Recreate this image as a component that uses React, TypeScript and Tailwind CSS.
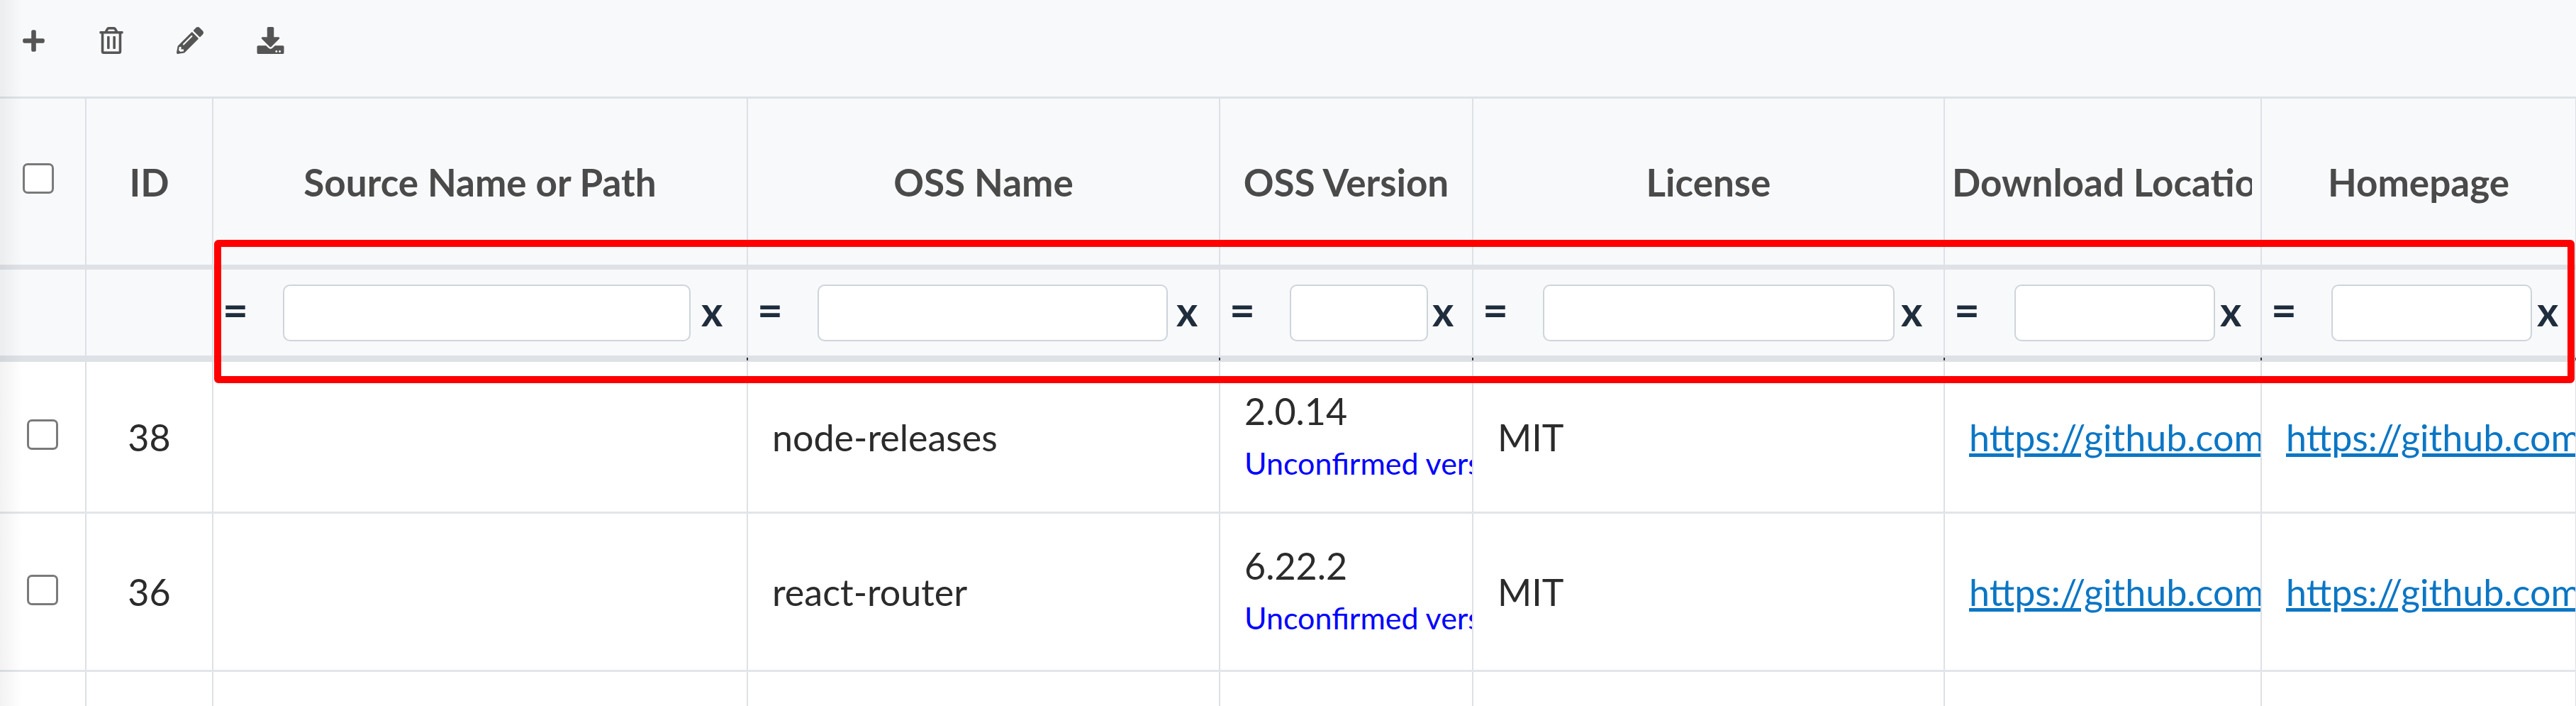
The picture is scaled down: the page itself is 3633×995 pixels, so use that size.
import React from 'react';
import { FaPlus, FaRegTrashAlt, FaPencilAlt, FaDownload } from 'react-icons/fa';

// column widths come from the reference, the last one runs off the page
const columns = [
  { key: 'check', width: 'w-[122px]' },
  { key: 'id', width: 'w-[179px]' },
  { key: 'source', width: 'w-[754px]' },
  { key: 'name', width: 'w-[666px]' },
  { key: 'version', width: 'w-[357px]' },
  { key: 'license', width: 'w-[665px]' },
  { key: 'download', width: 'w-[447px]' },
  { key: 'homepage', width: 'w-[444px]' },
];

const filters = [
  { label: 'Source Name or Path', width: 'w-[754px]', input: 'w-[575px]', gap: 'ml-[15px]' },
  { label: 'OSS Name', width: 'w-[666px]', input: 'w-[494px]', gap: 'ml-[12px]' },
  { label: 'OSS Version', width: 'w-[357px]', input: 'w-[195px]', gap: 'ml-[6px]' },
  { label: 'License', width: 'w-[665px]', input: 'w-[496px]', gap: 'ml-[9px]' },
  { label: 'Download Location', width: 'w-[447px]', input: 'w-[283px]', gap: 'ml-[7px]', clip: true },
  { label: 'Homepage', width: 'w-[444px]', input: 'w-[283px]', gap: 'ml-[7px]' },
];

const rows = [
  { id: 38, name: 'node-releases', version: '2.0.14', height: 'h-[214px]' },
  { id: 36, name: 'react-router', version: '6.22.2', height: 'h-[223px]' },
];

const line = 'border-r-2 border-[#dde0e5]';

const Checkbox = () => (
  <input type="checkbox" className="appearance-none block w-[44px] h-[43px] rounded-[7px] border-[3px] border-[#7a7a7a] bg-white" />
);

const FilterCell = ({ input, gap, width }: { input: string; gap: string; width: string }) => (
  <div className={`${width} ${line} relative shrink-0 flex items-center pl-[13px]`}>
    <span className="w-[85px] shrink-0 text-[62px] leading-none font-bold text-[#1f2d3d] -mt-[12px]">=</span>
    <input type="text" className={`${input} h-[80px] shrink-0 rounded-[10px] border-2 border-[#ced4da] bg-white`} />
    <span className={`${gap} shrink-0 text-[58px] leading-none font-bold text-[#1f2d3d] -mt-[6px]`}>x</span>
    <span className="absolute -right-[2px] -bottom-[7px] w-[2px] h-[4px] bg-[#333]" />
  </div>
);

export default function App() {
  return (
    <div className="relative w-[3633px] h-[995px] overflow-hidden bg-white text-[#2b2b2b] text-[52px] font-['Lato','Noto_Sans',sans-serif]">
      {/* toolbar */}
      <div className="h-[139px] bg-[#f8f9fb] border-b-[3px] border-[#dee2e6] flex items-start text-[#555555] pt-[38px]">
        <FaPlus className="w-[35px] h-[35px] ml-[30px] mt-[2px]" />
        <FaRegTrashAlt className="w-[36px] h-[38px] ml-[74px]" />
        <FaPencilAlt className="w-[38px] h-[38px] ml-[74px]" />
        <FaDownload className="w-[39px] h-[38px] ml-[75px]" />
      </div>

      {/* header */}
      <div className="flex h-[241px] bg-[#f8f9fb] border-b-[7px] border-[#dee2e6] font-bold text-[53px] text-[#4a4a4a]">
        <div className={`${columns[0].width} ${line} shrink-0 pl-[32px] pt-[91px]`}><Checkbox /></div>
        <div className={`${columns[1].width} ${line} shrink-0 flex items-center justify-center pt-[2px]`}>ID</div>
        {filters.map((f) => (
          <div key={f.label} className={`${f.width} ${line} shrink-0 flex items-center overflow-hidden pt-[2px] whitespace-nowrap ${f.clip ? 'justify-start pl-[10px] pr-[12px]' : 'justify-center px-[12px]'}`}>
            <span className={f.clip ? 'block w-full overflow-hidden' : ''}>{f.label}</span>
          </div>
        ))}
      </div>

      {/* filter row */}
      <div className="flex h-[130px] bg-[#f8f9fb] border-b-[9px] border-[#dee2e6]">
        <div className={`${columns[0].width} ${line} shrink-0`} />
        <div className={`${columns[1].width} ${line} shrink-0`} />
        {filters.map((f) => (
          <FilterCell key={f.label} input={f.input} gap={f.gap} width={f.width} />
        ))}
      </div>

      {/* body */}
      {rows.map((r) => (
        <div key={r.id} className={`flex ${r.height} border-b-[3px] border-[#e2e5ea]`}>
          <div className={`${columns[0].width} ${line} shrink-0 flex items-center pl-[38px] pb-[6px]`}><Checkbox /></div>
          <div className={`${columns[1].width} ${line} shrink-0 flex items-center justify-center`}>{r.id}</div>
          <div className={`w-[754px] ${line} shrink-0`} />
          <div className={`w-[666px] ${line} shrink-0 flex items-center pl-[34px]`}>{r.name}</div>
          <div className={`w-[357px] ${line} shrink-0 flex flex-col justify-center pl-[34px] overflow-hidden whitespace-nowrap`}>
            <span className="leading-[60px]">{r.version}</span>
            <span className="text-[43px] leading-[60px] mt-[14px] text-[#0000ff]">Unconfirmed version</span>
          </div>
          <div className={`w-[665px] ${line} shrink-0 flex items-center pl-[34px]`}>MIT</div>
          <div className={`w-[447px] ${line} shrink-0 flex items-center pl-[34px] overflow-hidden whitespace-nowrap`}>
            <a className="underline text-[#0b76c5]">https://github.com/browserslist</a>
          </div>
          <div className={`w-[444px] ${line} shrink-0 flex items-center pl-[34px] overflow-hidden whitespace-nowrap`}>
            <a className="underline text-[#0b76c5]">https://github.com/browserslist</a>
          </div>
        </div>
      ))}

      {/* third row, cut off by the page */}
      <div className="flex h-[60px]">
        {columns.map((c) => (
          <div key={c.key} className={`${c.width} ${line} shrink-0`} />
        ))}
      </div>

      {/* soft shadow along the left edge */}
      <div className="absolute inset-y-0 left-0 w-[32px] bg-gradient-to-r from-black/5 to-transparent pointer-events-none" />

      {/* red annotation box */}
      <div className="absolute left-[302px] top-[338px] w-[3329px] h-[202px] border-[10px] border-[#ff0000] rounded-[6px] pointer-events-none" />
    </div>
  );
}
